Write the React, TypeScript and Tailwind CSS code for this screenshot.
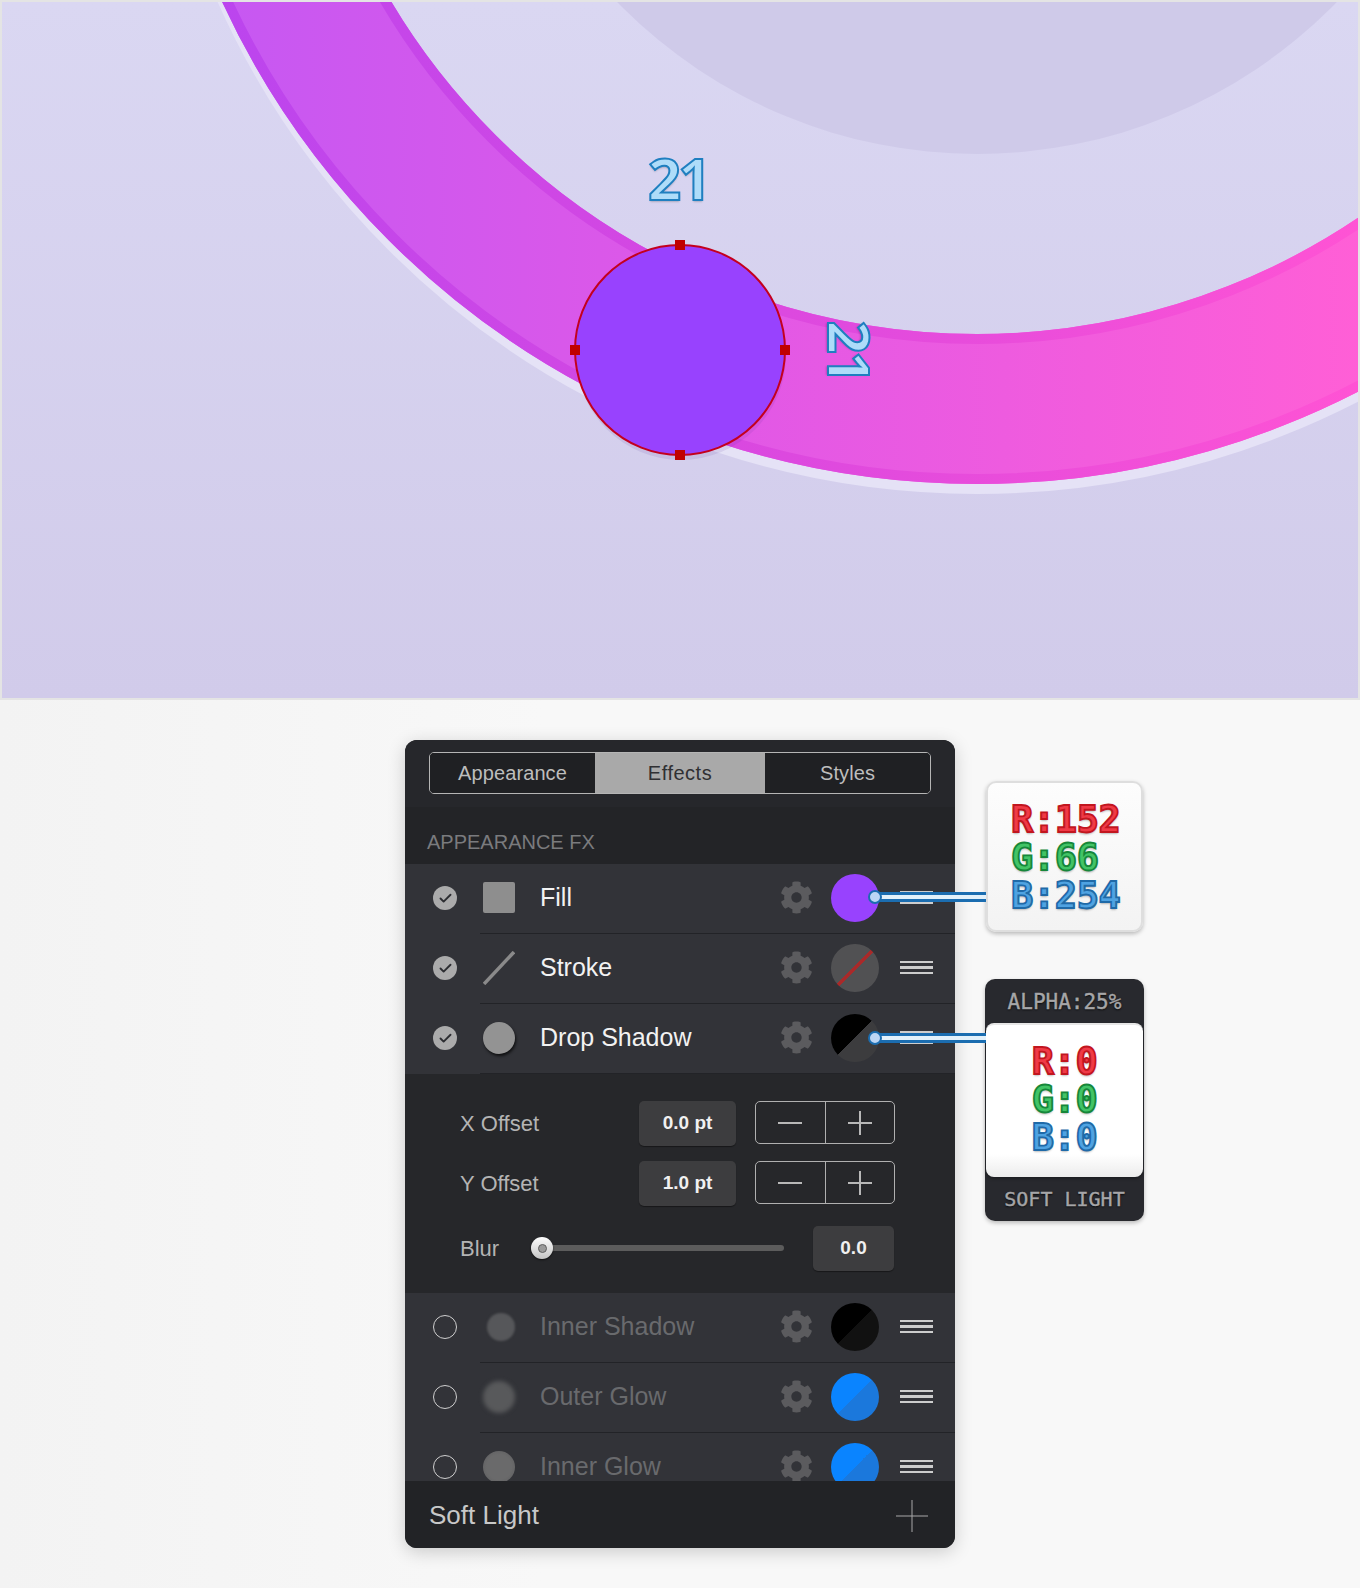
import { Check } from "lucide-react";
import { FaCog } from "react-icons/fa";
import type { ReactNode } from "react";

type FxRow = {
  label: string;
  on: boolean;
  icon: ReactNode;
  swatch: string;
};

const FX_TOP: FxRow[] = [
  {
    label: "Fill",
    on: true,
    icon: <div className="h-[31px] w-8 rounded-[2px] bg-[#8e8e8e]" />,
    swatch: "bg-[#9842fe]",
  },
  {
    label: "Stroke",
    on: true,
    icon: (
      <svg width="32" height="34" viewBox="0 0 32 34">
        <line x1="1" y1="33" x2="31" y2="1" stroke="#8a8a8a" strokeWidth="3.5" />
      </svg>
    ),
    swatch:
      "bg-[linear-gradient(135deg,#515153_47%,#a82a2a_47%,#a82a2a_53%,#515153_53%)]",
  },
  {
    label: "Drop Shadow",
    on: true,
    icon: (
      <div className="h-8 w-8 rounded-full bg-[#939393] shadow-[1px_2px_3px_rgba(0,0,0,0.7)]" />
    ),
    swatch: "bg-[linear-gradient(135deg,#000_50%,#3c3c3e_50%)]",
  },
];

const FX_BOTTOM: FxRow[] = [
  {
    label: "Inner Shadow",
    on: false,
    icon: (
      <div className="ml-[3px] h-7 w-7 rounded-full bg-[#56575a] blur-[1px]" />
    ),
    swatch: "bg-[linear-gradient(135deg,#000_50%,#111_50%)]",
  },
  {
    label: "Outer Glow",
    on: false,
    icon: <div className="h-8 w-8 rounded-full bg-[#58595b] blur-[2px]" />,
    swatch: "bg-[linear-gradient(135deg,#0a84ff_50%,#1b78dc_50%)]",
  },
  {
    label: "Inner Glow",
    on: false,
    icon: (
      <div className="h-8 w-8 rounded-full bg-[radial-gradient(circle,#6a6a6b_55%,#5a5a5c_100%)]" />
    ),
    swatch: "bg-[linear-gradient(135deg,#0a84ff_50%,#1b78dc_50%)]",
  },
];

function Toggle({ on }: { on: boolean }) {
  if (on) {
    return (
      <div className="flex h-6 w-6 items-center justify-center rounded-full bg-[#ababab]">
        <Check size={15} strokeWidth={3} className="text-[#2c2d31]" />
      </div>
    );
  }
  return <div className="h-6 w-6 rounded-full border border-[#cfcfcf]" />;
}

function MenuLines() {
  return (
    <div className="flex w-[33px] flex-col gap-[3px]">
      <div className="h-[2.5px] bg-[#cdcdcd]" />
      <div className="h-[2.5px] bg-[#cdcdcd]" />
      <div className="h-[2.5px] bg-[#cdcdcd]" />
    </div>
  );
}

function Row({ row }: { row: FxRow }) {
  return (
    <div className="flex h-[70px] shrink-0 items-center bg-[#323338]">
      <div className="-mt-[2px] flex w-[75px] shrink-0 justify-end pr-[23px]">
        <Toggle on={row.on} />
      </div>
      <div className="flex h-full flex-1 items-center border-b border-[#222327] pb-[2px] pl-[3px] pr-[22px]">
        <div className="flex w-8 items-center justify-center">{row.icon}</div>
        <div
          className={`ml-[25px] flex-1 text-[25px] ${row.on ? "text-[#f2f2f2]" : "text-[#696a6d]"}`}
        >
          {row.label}
        </div>
        <FaCog size={33} className="text-[#5b5b5e]" />
        <div className={`ml-[18px] h-12 w-12 rounded-full ${row.swatch}`} />
        <div className="ml-[21px]">
          <MenuLines />
        </div>
      </div>
    </div>
  );
}

function Stepper() {
  return (
    <div className="ml-[19px] flex h-[43px] w-[140px] rounded-[5px] border border-[#b0b0b0]">
      <div className="flex flex-1 items-center justify-center border-r border-[#b0b0b0]">
        <svg width="24" height="24" viewBox="0 0 24 24">
          <line x1="0" y1="12" x2="24" y2="12" stroke="#b8b8b8" strokeWidth="2" />
        </svg>
      </div>
      <div className="flex flex-1 items-center justify-center">
        <svg width="24" height="24" viewBox="0 0 24 24">
          <line x1="0" y1="12" x2="24" y2="12" stroke="#b8b8b8" strokeWidth="2" />
          <line x1="12" y1="0" x2="12" y2="24" stroke="#b8b8b8" strokeWidth="2" />
        </svg>
      </div>
    </div>
  );
}

function ValueBox({ children, className }: { children: ReactNode; className: string }) {
  return (
    <div
      className={`flex h-[45px] items-center justify-center rounded-[5px] bg-[#3d3d3f] text-[19px] font-bold text-[#f0f0f0] shadow-[0_1px_1px_rgba(0,0,0,0.4)] ${className}`}
    >
      {children}
    </div>
  );
}

function OffsetRow({ label, value, className }: { label: string; value: string; className: string }) {
  return (
    <div className={`flex items-start ${className}`}>
      <div className="flex h-[45px] w-[179px] items-center text-[22px] text-[#b4b4b4]">
        {label}
      </div>
      <ValueBox className="w-[97px]">{value}</ValueBox>
      <Stepper />
    </div>
  );
}

function Panel() {
  return (
    <div className="relative ml-[405px] mt-[40px] flex h-[808px] w-[550px] shrink-0 flex-col overflow-hidden rounded-[12px] bg-[#26272b] font-['Liberation_Sans',Arial,sans-serif] shadow-[0_4px_18px_rgba(0,0,0,0.18)]">
      <div className="h-[67px] shrink-0 bg-[#26272b] px-6 pt-3">
        <div className="flex h-[42px] overflow-hidden rounded-[5px] border border-[#b5b5b5] text-[20px] tracking-[0.1px]">
          <div className="flex w-[165px] items-center justify-center bg-[#1f2023] text-[#bdbdbd]">
            Appearance
          </div>
          <div className="flex w-[170px] items-center justify-center bg-[#a9a9a9] tracking-[0.5px] text-[#303033]">
            Effects
          </div>
          <div className="flex flex-1 items-center justify-center bg-[#1f2023] text-[#bdbdbd]">
            Styles
          </div>
        </div>
      </div>
      <div className="flex h-[57px] shrink-0 items-end bg-[#232427] pb-[7px] pl-[22px] text-[20px] text-[#7a7b7e]">
        APPEARANCE FX
      </div>
      <div className="flex min-h-0 flex-1 flex-col overflow-hidden">
        {FX_TOP.map((row) => (
          <Row key={row.label} row={row} />
        ))}
        <div className="h-[219px] shrink-0 bg-[#26272a] pl-[55px] pt-[27px]">
          <OffsetRow label="X Offset" value="0.0 pt" className="" />
          <OffsetRow label="Y Offset" value="1.0 pt" className="mt-[15px]" />
          <div className="mt-[19px] flex h-[46px] items-center">
            <div className="w-[71px] text-[22px] text-[#b4b4b4]">Blur</div>
            <div className="relative h-[6px] w-[253px] rounded-full bg-[#5c5c5c]">
              <div className="absolute -top-2 left-0 flex h-[22px] w-[22px] items-center justify-center rounded-full bg-[linear-gradient(#fdfdfd,#c4c4c4)] shadow-[0_1px_2px_rgba(0,0,0,0.6)]">
                <div className="h-[9px] w-[9px] rounded-full border border-[#5f5f5f] bg-[#9a9a9a]" />
              </div>
            </div>
            <ValueBox className="ml-[29px] w-[81px]">0.0</ValueBox>
          </div>
        </div>
        {FX_BOTTOM.map((row) => (
          <Row key={row.label} row={row} />
        ))}
      </div>
      <div className="flex h-[67px] shrink-0 items-center justify-between bg-[#222326] pl-6 pr-[27px] pt-[2px] text-[26px] text-[#c8c8c8]">
        <span>Soft Light</span>
        <svg width="32" height="32" viewBox="0 0 32 32">
          <line x1="0" y1="16" x2="32" y2="16" stroke="#a8a8a8" strokeWidth="1" />
          <line x1="16" y1="0" x2="16" y2="32" stroke="#a8a8a8" strokeWidth="1" />
        </svg>
      </div>
    </div>
  );
}

const RED = "text-[#f03a46] [-webkit-text-stroke:1.8px_#c2161f] [text-shadow:0_2px_2px_rgba(0,0,0,0.25)]";
const GREEN = "text-[#42c466] [-webkit-text-stroke:1.8px_#16873a] [text-shadow:0_2px_2px_rgba(0,0,0,0.25)]";
const BLUE = "text-[#4fa3e2] [-webkit-text-stroke:1.8px_#1f6aa8] [text-shadow:0_2px_2px_rgba(0,0,0,0.25)]";
const MONO = "font-['DejaVu_Sans_Mono',monospace] font-bold";
const CAPTION =
  "text-[#a6a6a8] [-webkit-text-stroke:0.4px_#a6a6a8] [text-shadow:0_1px_2px_rgba(0,0,0,0.9)]";

function RgbLines({ r, g, b }: { r: string; g: string; b: string }) {
  return (
    <div className={`${MONO} text-[37px] leading-[38px] tracking-[-0.4px]`}>
      <div className={RED}>R:{r}</div>
      <div className={GREEN}>G:{g}</div>
      <div className={BLUE}>B:{b}</div>
    </div>
  );
}

function Callouts() {
  return (
    <div className="ml-[30px] w-[159px] shrink-0">
      <div className="mx-px mt-[81px] h-[151px] rounded-[10px] border-2 border-[#dedede] bg-[linear-gradient(#fdfdfd,#f3f3f3)] pl-[23px] pt-[18px] shadow-[0_2px_4px_rgba(0,0,0,0.25)]">
        <RgbLines r="152" g="66" b="254" />
      </div>
      <div className="mt-[47px] flex h-[242px] flex-col rounded-[10px] bg-[#28292e] shadow-[0_2px_4px_rgba(0,0,0,0.25)]">
        <div className={`flex h-[44px] items-center justify-center pt-1 text-[21px] ${MONO} font-normal ${CAPTION}`}>
          ALPHA:25%
        </div>
        <div className="mx-px flex h-[154px] items-center justify-center rounded-[8px] border-t-2 border-[#e6e6e6] bg-[linear-gradient(#ffffff_85%,#ececec)] pb-[2px] shadow-[0_2px_3px_rgba(0,0,0,0.3)]">
          <RgbLines r="0" g="0" b="0" />
        </div>
        <div className={`flex h-[44px] items-center justify-center text-[20px] ${MONO} font-normal ${CAPTION}`}>
          SOFT LIGHT
        </div>
      </div>
    </div>
  );
}

function Connector({ className }: { className: string }) {
  return (
    <div className={`absolute left-[875px] flex h-[10px] w-[111px] items-center border-y-[3px] border-[#1b6db0] bg-[#e2f1fb] ${className}`}>
      <div className="-ml-[7px] h-[14px] w-[14px] shrink-0 rounded-full border-2 border-[#1b6db0] bg-[#bcd6f5]" />
    </div>
  );
}

function Handle({ className }: { className: string }) {
  return <div className={`absolute h-[10px] w-[10px] bg-[#c00000] ${className}`} />;
}

const SIZE_LABEL =
  "absolute font-['Open_Sans',sans-serif] text-[58px] font-bold leading-none tracking-[-3px] text-[#aedcf9] [-webkit-text-stroke:2px_#1f7fc0] [text-shadow:0_2px_2px_rgba(0,0,0,0.2)]";

function Canvas() {
  return (
    <section className="relative h-[700px] shrink-0 overflow-hidden border-2 border-[#e4e4e4] bg-[linear-gradient(#dad7f2,#d1cbea)]">
      <svg
        className="absolute -left-[2px] -top-[2px]"
        width="1360"
        height="700"
        viewBox="0 0 1360 700"
      >
        <defs>
          <linearGradient id="ring" gradientUnits="userSpaceOnUse" x1="220" y1="0" x2="1360" y2="0">
            <stop offset="0" stopColor="#c658f2" />
            <stop offset="0.45" stopColor="#e158e6" />
            <stop offset="1" stopColor="#ff5fd6" />
          </linearGradient>
          <linearGradient id="edge" gradientUnits="userSpaceOnUse" x1="220" y1="0" x2="1360" y2="0">
            <stop offset="0" stopColor="#bb45ee" />
            <stop offset="0.45" stopColor="#d948e0" />
            <stop offset="1" stopColor="#ff53d4" />
          </linearGradient>
        </defs>
        <circle cx="977" cy="-348" r="502" fill="#cfcae9" />
        <circle cx="977" cy="-338" r="757" fill="none" stroke="#e5e2f6" strokeWidth="150" />
        <circle cx="977" cy="-348" r="757" fill="none" stroke="url(#ring)" strokeWidth="150" />
        <circle cx="977" cy="-348" r="827" fill="none" stroke="url(#edge)" strokeWidth="10" />
        <circle cx="977" cy="-348" r="687" fill="none" stroke="url(#edge)" strokeWidth="10" />
        <circle cx="681" cy="355" r="105" fill="#4a2a90" opacity="0.1" />
        <circle cx="680" cy="350" r="105" fill="#9842fe" stroke="#c4001e" strokeWidth="2" />
      </svg>
      <Handle className="left-[673px] top-[238px]" />
      <Handle className="left-[673px] top-[448px]" />
      <Handle className="left-[568px] top-[343px]" />
      <Handle className="left-[778px] top-[343px]" />
      <span className={`${SIZE_LABEL} left-[646px] top-[147px]`}>21</span>
      <span className={`${SIZE_LABEL} left-[818px] top-[320px] rotate-90`}>21</span>
    </section>
  );
}

export default function App() {
  return (
    <div className="relative flex h-[1588px] w-[1360px] flex-col overflow-hidden bg-[#f7f7f7]">
      <Canvas />
      <div className="relative flex flex-1 bg-[linear-gradient(90deg,#f3f3f3,#f8f8f8_40%)]">
        <Panel />
        <Callouts />
        <Connector className="top-[192px]" />
        <Connector className="top-[333px]" />
      </div>
    </div>
  );
}
